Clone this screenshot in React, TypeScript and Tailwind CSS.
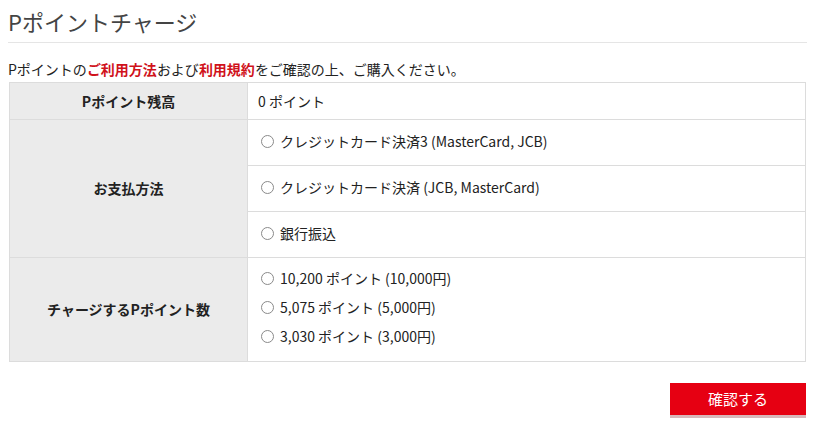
import React from "react";

const FONT = { fontFamily: '"Noto Sans CJK JP", "Noto Sans", sans-serif' };

const payments = [
  "クレジットカード決済3 (MasterCard, JCB)",
  "クレジットカード決済 (JCB, MasterCard)",
  "銀行振込",
];

const amounts = [
  "10,200 ポイント (10,000円)",
  "5,075 ポイント (5,000円)",
  "3,030 ポイント (3,000円)",
];

function Radio({ name }: { name: string }) {
  return (
    <input
      type="radio"
      name={name}
      className="appearance-none w-[13px] h-[13px] rounded-full border border-[#8a8a8a] bg-white mr-[6px] shrink-0"
    />
  );
}

export default function App() {
  return (
    <div className="w-[822px] h-[436px] bg-white text-[#222] pl-2 pr-[15px]" style={FONT}>
      {/* Title */}
      <h1 className="text-[22px] leading-[30px] pt-[6px] pb-[6px] border-b border-[#e5e5e5] text-[#444] font-normal">
        Pポイントチャージ
      </h1>

      {/* Intro */}
      <p className="text-[14px] leading-[20px] mt-[16px] mb-[3px] text-[#222]">
        Pポイントの<span className="text-[#d0121b] font-bold">ご利用方法</span>および
        <span className="text-[#d0121b] font-bold">利用規約</span>をご確認の上、ご購入ください。
      </p>

      {/* Table */}
      <table className="ml-px w-[797px] border-collapse text-[14px]">
        <tbody>
          <tr className="h-[37px]">
            <th className="w-[238px] bg-[#ebebeb] border border-[#dcdcdc] font-bold text-center">
              Pポイント残高
            </th>
            <td className="border border-[#dcdcdc] px-[10px]">0 ポイント</td>
          </tr>
          {payments.map((p, i) => (
            <tr key={p} className="h-[46px]">
              {i === 0 && (
                <th
                  rowSpan={3}
                  className="bg-[#ebebeb] border border-[#dcdcdc] font-bold text-center"
                >
                  お支払方法
                </th>
              )}
              <td className="border border-[#dcdcdc] px-[13px] pb-[2px]">
                <label className="flex items-center">
                  <Radio name="pay" />
                  {p}
                </label>
              </td>
            </tr>
          ))}
          <tr>
            <th className="bg-[#ebebeb] border border-[#dcdcdc] font-bold text-center">
              チャージするPポイント数
            </th>
            <td className="border border-[#dcdcdc] px-[13px] pt-[6px] pb-[10px]">
              {amounts.map((a) => (
                <label key={a} className="flex items-center h-[29px]">
                  <Radio name="amount" />
                  {a}
                </label>
              ))}
            </td>
          </tr>
        </tbody>
      </table>

      {/* Submit */}
      <div className="flex justify-end mt-[21px] pr-px">
        <button className="w-[136px] h-[32px] bg-[#e60012] text-white text-[15px] shadow-[0_3px_0_#d8b7ba]">
          確認する
        </button>
      </div>
    </div>
  );
}
